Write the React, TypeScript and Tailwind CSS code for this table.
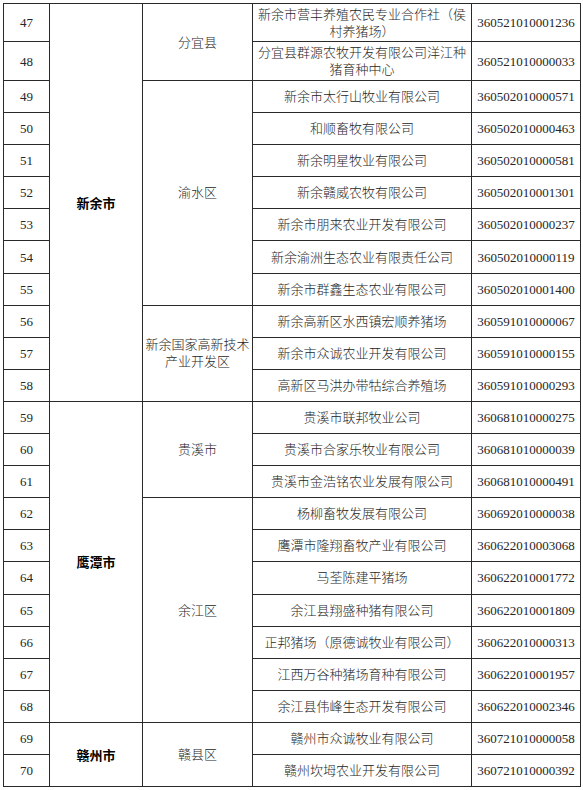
import React from "react";

type Row = {
	no: number;
	name: React.ReactNode;
	code: string;
	h?: string;
};

const rows: Row[] = [
	{
		no: 47,
		name: (
			<>
				新余市营丰养殖农民专业合作社（侯
				<br />
				村养猪场）
			</>
		),
		code: "360521010001236",
		h: "h-[38px]",
	},
	{
		no: 48,
		name: (
			<>
				分宜县群源农牧开发有限公司洋江种
				<br />
				猪育种中心
			</>
		),
		code: "360521010000033",
		h: "h-[39px]",
	},
	{ no: 49, name: "新余市太行山牧业有限公司", code: "360502010000571" },
	{ no: 50, name: "和顺畜牧有限公司", code: "360502010000463" },
	{ no: 51, name: "新余明星牧业有限公司", code: "360502010000581" },
	{ no: 52, name: "新余赣威农牧有限公司", code: "360502010001301" },
	{ no: 53, name: "新余市朋来农业开发有限公司", code: "360502010000237" },
	{ no: 54, name: "新余渝洲生态农业有限责任公司", code: "360502010000119" },
	{ no: 55, name: "新余市群鑫生态农业有限公司", code: "360502010001400" },
	{ no: 56, name: "新余高新区水西镇宏顺养猪场", code: "360591010000067" },
	{ no: 57, name: "新余市众诚农业开发有限公司", code: "360591010000155" },
	{ no: 58, name: "高新区马洪办带牯综合养殖场", code: "360591010000293" },
	{ no: 59, name: "贵溪市联邦牧业公司", code: "360681010000275" },
	{ no: 60, name: "贵溪市合家乐牧业有限公司", code: "360681010000039" },
	{ no: 61, name: "贵溪市金浩铭农业发展有限公司", code: "360681010000491" },
	{ no: 62, name: "杨柳畜牧发展有限公司", code: "360692010000038" },
	{ no: 63, name: "鹰潭市隆翔畜牧产业有限公司", code: "360622010003068" },
	{ no: 64, name: "马荃陈建平猪场", code: "360622010001772" },
	{ no: 65, name: "余江县翔盛种猪有限公司", code: "360622010001809" },
	{ no: 66, name: "正邦猪场（原德诚牧业有限公司）", code: "360622010000313" },
	{ no: 67, name: "江西万谷种猪场育种有限公司", code: "360622010001957" },
	{ no: 68, name: "余江县伟峰生态开发有限公司", code: "360622010002346" },
	{ no: 69, name: "赣州市众诚牧业有限公司", code: "360721010000058" },
	{ no: 70, name: "赣州坎坶农业开发有限公司", code: "360721010000392" },
];

// city / county spans keyed by the first row number they start on
const cities: Record<number, { name: string; span: number }> = {
	47: { name: "新余市", span: 12 },
	59: { name: "鹰潭市", span: 10 },
	69: { name: "赣州市", span: 2 },
};

const counties: Record<number, { name: React.ReactNode; span: number }> = {
	47: { name: "分宜县", span: 2 },
	49: { name: "渝水区", span: 7 },
	56: {
		name: (
			<>
				新余国家高新技术
				<br />
				产业开发区
			</>
		),
		span: 3,
	},
	59: { name: "贵溪市", span: 3 },
	62: { name: "余江区", span: 7 },
	69: { name: "赣县区", span: 2 },
};

const cell = "border border-[#2a2a2a] text-center align-middle p-0";

export default function App() {
	return (
		<div className="bg-white w-[583px] h-[790px] pt-[3px] pl-[3px]">
			<table
				className="table-fixed border-collapse w-[577px]
				text-[13px] leading-[17px] text-[#262626] font-light
				font-['Liberation_Serif','Noto_Sans_CJK_SC',serif]"
			>
				<colgroup>
					<col className="w-[46px]" />
					<col className="w-[93px]" />
					<col className="w-[110px]" />
					<col className="w-[219px]" />
					<col className="w-[109px]" />
				</colgroup>
				<tbody>
					{rows.map((r) => {
						const city = cities[r.no];
						const county = counties[r.no];
						return (
							<tr key={r.no} className={r.h ?? "h-[32.1px]"}>
								<td className={cell}>{r.no}</td>
								{city && (
									<td
										rowSpan={city.span}
										className={`${cell} font-bold font-['Noto_Sans_CJK_SC',sans-serif] text-[13px] text-black`}
									>
										{city.name}
									</td>
								)}
								{county && (
									<td rowSpan={county.span} className={`${cell} px-[2px]`}>
										{county.name}
									</td>
								)}
								<td className={`${cell} px-[3px] whitespace-nowrap`}>{r.name}</td>
								<td className={`${cell}`}>{r.code}</td>
							</tr>
						);
					})}
				</tbody>
			</table>
		</div>
	);
}
